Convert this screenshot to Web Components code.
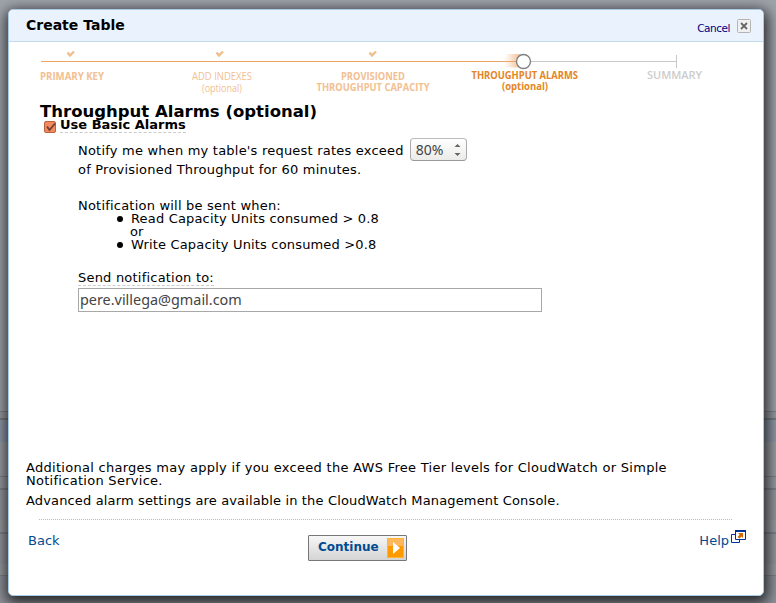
<!DOCTYPE html>
<html lang="en"><head><meta charset="utf-8"><title>Create Table</title>
<style>
html,body{margin:0;height:100%;overflow:hidden}
body{font-family:"DejaVu Sans",sans-serif;font-size:13px;line-height:13px;color:#000;
background:linear-gradient(#9fa4ab 0,#9fa4ab 411px,#7e838a 411px,#7e838a 412px,#979ba1 412px,#979ba1 418px,#797e85 418px,#797e85 420px,#8f99a8 420px,#8f99a8 442px,#9b9ea3 442px,#9b9ea3 476px,#7e838a 476px,#7e838a 477px,#979ba1 477px,#979ba1 488px,#7e838a 488px,#7e838a 490px,#95989e 490px,#95989e 520px,#999ca1 520px,#999ca1 532px,#7e838a 532px,#7e838a 534px,#94979d 534px,#94979d 564px,#999ca1 564px,#999ca1 575px,#7e838a 575px,#7e838a 576px,#8f939b 576px)}
</style></head><body>
<wizard-dialog heading="Create Table">
<wizard-steps slot="steps"></wizard-steps>
<alarm-form></alarm-form>
<wizard-footer slot="footer"></wizard-footer>
</wizard-dialog>
<script>
const define=(name,html,init)=>{const t=document.createElement('template');t.innerHTML=html;
customElements.define(name,class extends HTMLElement{constructor(){super();this.attachShadow({mode:'open'}).append(t.content.cloneNode(true));}
connectedCallback(){init&&init(this,this.shadowRoot);}});};

define('close-button',`<style>:host{display:flex;align-items:center;gap:7px;font-size:10.5px;color:#000080;letter-spacing:-.45px}span{padding-top:4px}svg{display:block}</style>
<span>Cancel</span><svg width="14" height="14" viewBox="0 0 14 14"><rect x=".5" y=".5" width="13" height="13" rx="1" fill="#f0f0f0" stroke="#b4b4b4"/><path d="M4 4l6 6M10 4l-6 6" stroke="#666" stroke-width="1.8"/></svg>`);

define('wizard-steps',`<style>:host{display:block;height:58px}svg{display:block}text{font-family:"Open Sans","Noto Sans",sans-serif;font-size:10.5px}</style>
<svg width="754" height="58" viewBox="9 42 754 58">
<defs><linearGradient id="g"><stop offset="0" stop-color="#f0a060" stop-opacity="0"/><stop offset="1" stop-color="#f0a060" stop-opacity=".4"/></linearGradient></defs>
<path d="M41 61.5H516" stroke="#eda566"/><path d="M530 61.5H676" stroke="#c8c8c8"/><path d="M676.5 55v13" stroke="#c8c8c8"/>
<g fill="none" stroke="#f0bd8c" stroke-width="2.4"><path id="c" d="M67.5 52.5l2.5 3 4-4"/><use href="#c" x="149"/><use href="#c" x="302"/></g>
<path d="M506 54h14v3h-14zM502 57h17v3h-17zM505 60h12v5h-12zM503 65h16v2h-16z" fill="url(#g)"/><path d="M508 54h12v14h-12z" fill="url(#g)"/>
<circle cx="523.5" cy="61.5" r="7" fill="#fff" stroke="#808080" stroke-width="1.4"/>
<g fill="#f2c092" font-weight="700"><text x="40" y="80" textLength="64" lengthAdjust="spacingAndGlyphs">PRIMARY KEY</text>
<text x="192" y="80" font-weight="500" textLength="60" lengthAdjust="spacingAndGlyphs">ADD INDEXES</text><text x="202" y="92" font-weight="400" textLength="40" lengthAdjust="spacingAndGlyphs">(optional)</text>
<text x="341" y="80" textLength="64" lengthAdjust="spacingAndGlyphs">PROVISIONED</text><text x="316.500" y="91" textLength="113" lengthAdjust="spacingAndGlyphs">THROUGHPUT CAPACITY</text></g>
<g fill="#e58525" font-weight="700"><text x="471.500" y="79" textLength="106.500" lengthAdjust="spacingAndGlyphs">THROUGHPUT ALARMS</text><text x="502" y="90" textLength="46" lengthAdjust="spacingAndGlyphs">(optional)</text></g>
<text x="647" y="79" fill="#ccc" font-weight="600" textLength="55" lengthAdjust="spacingAndGlyphs">SUMMARY</text>
</svg>`);

define('wizard-dialog',`<style>:host{display:flex;flex-direction:column;box-sizing:border-box;width:756px;height:587px;margin:9px 0 0 8px;background:#fff;border:1px solid #a9cbe4;border-radius:5px;box-shadow:1px 4px 14px 3px rgba(0,0,0,.75);overflow:hidden}
header{box-sizing:border-box;height:32px;flex:none;background:#eaf2fe;border-bottom:1px solid #c4dced;display:flex;justify-content:space-between;padding:0 12px 0 17px}
h1{margin:8px 0 0;font-size:14px;line-height:14px}close-button{height:14px;margin-top:9px}
main{flex:1}</style><header><h1></h1><close-button></close-button></header><slot name="steps"></slot><main><slot></slot></main><slot name="footer"></slot>`,(h,r)=>r.querySelector('h1').textContent=h.getAttribute('heading'));

define('value-stepper',`<style>:host{display:inline-flex;box-sizing:border-box;width:57px;height:23px;border:1px solid #aaa;border-color:#bbb #aaa #999;border-radius:4px;background:linear-gradient(#fff,#ebebe9);align-items:center;justify-content:space-between;padding:0 5px;font:14px "Noto Sans",sans-serif;letter-spacing:0;color:#444}svg{margin-top:1px}</style><slot></slot><svg width="7" height="14"><path d="M.5 4L3.500 1 6.500 4zM.5 10L3.500 13 6.500 10z" fill="#666"/></svg>`);

define('alarm-form',`<style>:host{display:block;padding:3px 0 0 31px}
h2{margin:0;font-size:16.5px;line-height:17px}
.check{display:flex;gap:4px;padding-left:4px;height:15px;margin-top:-2px}.check svg{margin-top:3px}
.check b{font-size:13px;line-height:13px;height:14px;border-bottom:1px dashed #ccc}
.body{padding-left:38px;letter-spacing:.21px}.row{display:flex;align-items:center;gap:6px;height:23px;margin-top:5px}.row span{padding-top:1px}
ul{margin:0;padding:0 0 0 53px;letter-spacing:.17px;list-style:none}li{position:relative}li::before{content:"";position:absolute;left:-14px;top:4px;width:6px;height:6px;border-radius:50%;background:#000}p{margin:0}
.label{display:inline-block;height:14px;border-bottom:1px dashed #ccc}
.input{box-sizing:border-box;width:464px;height:24px;border:1px solid #a8a8a8;padding:0 1px;font:14.400px/21px "Noto Sans",sans-serif;letter-spacing:0;color:#444}</style>
<h2><span>Throughput Alarms (optional)</span></h2>
<div class="check"><svg width="12" height="12"><rect x=".5" y=".5" width="11" height="11" rx="1.500" fill="#f28a60" stroke="#b9603c"/><path d="M3 5.500l2.500 3.500L11 2.500" fill="none" stroke="#704030" stroke-width="1.800"/></svg><b>Use Basic Alarms</b></div>
<div class="body"><div class="row"><span>Notify me when my table's request rates exceed</span><value-stepper>80%</value-stepper></div>
<p style="margin-top:2px">of Provisioned Throughput for 60 minutes.</p>
<p style="margin-top:23px">Notification will be sent when:</p>
<ul><li>Read Capacity Units consumed &gt; 0.8<br><span style="margin-left:-1px">or</span></li><li>Write Capacity Units consumed &gt;0.8</li></ul>
<div style="margin-top:20px;height:17px"><span class="label">Send notification to:</span></div><div class="input">pere.villega@gmail.com</div></div>`);

define('continue-button',`<style>:host{box-sizing:border-box;width:99px;height:26px;border:1px solid #777;border-radius:1px;background:linear-gradient(#f7f7f7,#d4d4d4);display:flex;justify-content:space-between;padding:2px 2px 0 9px;color:#004b91;font-weight:700;font-size:12px;line-height:18px}</style><slot></slot><svg width="17" height="20"><path d="M0 0h17v20H0z" fill="#ff9900"/><path d="M0 0h17v8H0z" fill="#ffb75c"/><path d="M.5.5h16v19H.5z" fill="none" stroke="#ffb52e"/><path d="M6 4l7 6-7 6z" fill="#fff"/></svg>`);

define('wizard-footer',`<style>:host{display:block;height:134px}p{margin:0 0 7px 17px;letter-spacing:.15px}p.wide{letter-spacing:.28px}
hr{margin:12px 31px 0 30px;border:0;border-top:1px dotted #bbb}
nav{display:grid;grid-template-columns:280px 99px 1fr;padding:15px 17px 0 19px;color:#004b91;align-items:start}
nav>span{margin-top:-1px}.help{display:flex;justify-content:flex-end;gap:2px}.help svg{margin-top:-4px}</style>
<p class="wide">Additional charges may apply if you exceed the AWS Free Tier levels for CloudWatch or Simple<br>Notification Service.</p><p>Advanced alarm settings are available in the CloudWatch Management Console.</p><hr>
<nav><span>Back</span><continue-button>Continue</continue-button><span class="help">Help<svg width="15" height="13"><path d="M.5 4.500h8v8h-8z" fill="#fff" stroke="#039"/><path d="M4.500.5h10v9h-10z" fill="#fff" stroke="#039"/><path d="M4 1h11" stroke="#039" stroke-width="2"/><path d="M7 3h5v5l-1.500-1.500L8.500 8.500 6.500 7l2.200-2.200z" fill="#d26900"/></svg></span></nav>`);
</script></body></html>
